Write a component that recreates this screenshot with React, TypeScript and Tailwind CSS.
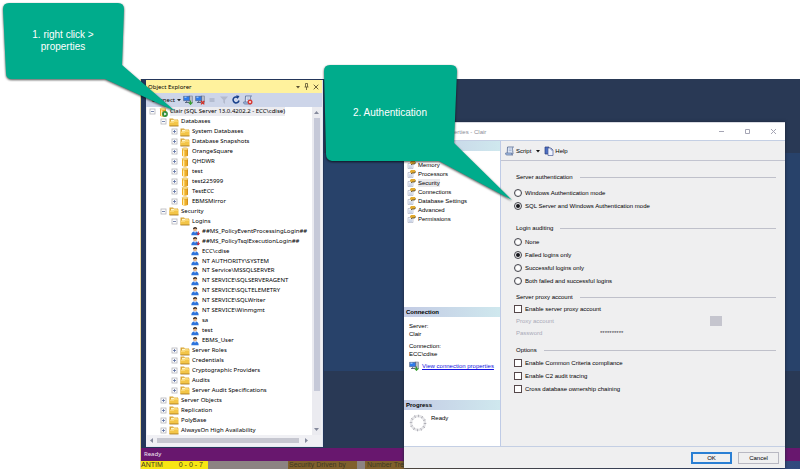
import type { ReactNode } from "react"

type NodeKind = "server" | "folder" | "db" | "user" | "userOff"

type TreeRow = {
  label: string
  depth: number
  kind: NodeKind
  open?: boolean
}

const rows: TreeRow[] = [
  { label: "Clair (SQL Server 13.0.4202.2 - ECC\\cdise)", depth: 0, kind: "server", open: true },
  { label: "Databases", depth: 1, kind: "folder", open: true },
  { label: "System Databases", depth: 2, kind: "folder" },
  { label: "Database Snapshots", depth: 2, kind: "folder" },
  { label: "OrangeSquare", depth: 2, kind: "db" },
  { label: "QHDWR", depth: 2, kind: "db" },
  { label: "test", depth: 2, kind: "db" },
  { label: "test225999", depth: 2, kind: "db" },
  { label: "TestECC", depth: 2, kind: "db" },
  { label: "EBMSMirror", depth: 2, kind: "db" },
  { label: "Security", depth: 1, kind: "folder", open: true },
  { label: "Logins", depth: 2, kind: "folder", open: true },
  { label: "##MS_PolicyEventProcessingLogin##", depth: 3, kind: "userOff" },
  { label: "##MS_PolicyTsqlExecutionLogin##", depth: 3, kind: "userOff" },
  { label: "ECC\\cdise", depth: 3, kind: "user" },
  { label: "NT AUTHORITY\\SYSTEM", depth: 3, kind: "user" },
  { label: "NT Service\\MSSQLSERVER", depth: 3, kind: "user" },
  { label: "NT SERVICE\\SQLSERVERAGENT", depth: 3, kind: "user" },
  { label: "NT SERVICE\\SQLTELEMETRY", depth: 3, kind: "user" },
  { label: "NT SERVICE\\SQLWriter", depth: 3, kind: "user" },
  { label: "NT SERVICE\\Winmgmt", depth: 3, kind: "user" },
  { label: "sa", depth: 3, kind: "user" },
  { label: "test", depth: 3, kind: "user" },
  { label: "EBMS_User", depth: 3, kind: "user" },
  { label: "Server Roles", depth: 2, kind: "folder" },
  { label: "Credentials", depth: 2, kind: "folder" },
  { label: "Cryptographic Providers", depth: 2, kind: "folder" },
  { label: "Audits", depth: 2, kind: "folder" },
  { label: "Server Audit Specifications", depth: 2, kind: "folder" },
  { label: "Server Objects", depth: 1, kind: "folder" },
  { label: "Replication", depth: 1, kind: "folder" },
  { label: "PolyBase", depth: 1, kind: "folder" },
  { label: "AlwaysOn High Availability", depth: 1, kind: "folder" },
]

const indents = ["pl-[2px]", "pl-[13px]", "pl-[24px]", "pl-[34px]"]

const pages = [
  "General",
  "Memory",
  "Processors",
  "Security",
  "Connections",
  "Database Settings",
  "Advanced",
  "Permissions",
]

function NodeIcon({ kind }: { kind: NodeKind }) {
  if (kind === "folder") {
    return (
      <svg className="h-[10px] w-[10px] shrink-0" viewBox="0 0 10 10">
        <path d="M.5 1.500h3.500l1 1h4v6.500H.5z" fill="#d9a536" />
        <path d="M2 2.800h6V7H2z" fill="#fff6c8" />
        <path d="M.5 9V4.500h4l1-1.200H9.500V9z" fill="#f3c548" />
        <path d="M1 5.300h3.800l1-1.100H9" stroke="#ffe79a" strokeWidth=".7" fill="none" />
        <path d="M.5 9h9" stroke="#9c6c14" strokeWidth=".8" />
      </svg>
    )
  }
  if (kind === "db" || kind === "server") {
    return (
      <svg className="h-[10px] w-[10px] shrink-0" viewBox="0 0 10 10">
        <path d="M2 2v6.500c0 1.500 6 1.500 6 0V2z" fill="#f0b02a" />
        <path d="M3.700 2.500v6.700" stroke="#fff0b0" strokeWidth="1.300" />
        <path d="M7.400 2.500v6.300" stroke="#c98a18" strokeWidth=".9" />
        <ellipse cx="5" cy="1.900" rx="3" ry="1.200" fill="#ffe38a" stroke="#c98d1a" strokeWidth=".4" />
        {kind === "server" && (
          <>
            <circle cx="7" cy="7" r="2.900" fill="#2f8f3a" />
            <path d="M6.200 5.500v3L8.700 7z" fill="#fff" />
          </>
        )}
      </svg>
    )
  }
  return (
    <svg className="h-[10px] w-[10px] shrink-0" viewBox="0 0 10 10">
      <path d="M1.300 9.200c0-3 1.700-4 3.700-4s3.700 1 3.700 4z" fill="#2f74dc" />
      <path d="M4 5.200l1 1.700 1.200-1.700z" fill="#fff" />
      <circle cx="5" cy="3.400" r="1.900" fill="#e8b48a" />
      <path d="M3 3.200C3 .4 7.200.4 7.200 3.200L5.500 2.400z" fill="#3b2b20" />
      {kind === "userOff" && <path d="M8.300 5.500v3M7 7.300l1.300 1.700 1.300-1.700" stroke="#c8202c" fill="none" />}
    </svg>
  )
}

function Expander({ open }: { open?: boolean }) {
  return (
    <svg className="h-[7px] w-[7px] shrink-0" viewBox="0 0 7 7" fill="none">
      <rect x="1" y="1" width="5" height="5" fill="#fff" stroke="#b4b4ba" strokeWidth=".8" />
      <path d={open ? "M2 3.500h3" : "M2 3.500h3M3.500 2v3"} stroke="#5b6da0" strokeWidth=".8" />
    </svg>
  )
}

function ServerIcon({ off }: { off?: boolean }) {
  return (
    <svg className="h-[10px] w-[10px] shrink-0" viewBox="0 0 10 10">
      <rect x="6" y="1" width="3.500" height="7" fill="#b8bcc8" stroke="#6b7285" strokeWidth=".5" />
      <rect x=".7" y="1.200" width="6" height="4.600" fill="#2f7bea" stroke="#5c6680" strokeWidth=".6" />
      <path d="M1.500 2.200h2" stroke="#b8dcff" />
      <path d="M2 7.500h4M3.700 6v1.500" stroke="#5c6680" />
      {off ? (
        <path d="M6 6l3.300 3.300M9.300 6L6 9.300" stroke="#d52a20" strokeWidth="1.200" />
      ) : (
        <path d="M7.500 5.500v3.700M5.700 7.300l1.800 2 1.800-2" stroke="#35a02c" strokeWidth="1.100" fill="none" />
      )}
    </svg>
  )
}

function ScriptIcon({ off }: { off?: boolean }) {
  return (
    <svg className="h-[10px] w-[10px] shrink-0" viewBox="0 0 10 10">
      <path d="M2.500 1h6c-1.500.5-1 2-.8 3.500L8 8H2.200z" fill="#e3ecfa" stroke="#566a92" strokeWidth=".8" />
      <path d="M.6 7h6.200c-.6 1 .2 2 1 2H1.800C.8 9 .4 8 .6 7z" fill="#a9c3ea" stroke="#566a92" strokeWidth=".7" />
      <path d="M3.700 3h3M3.700 4.700h3" stroke="#7d92ba" strokeWidth=".6" />
      {off && (
        <>
          <circle cx="7" cy="7" r="2.500" fill="#d83a34" />
          <path d="M6 6l2 2M8 6L6 8" stroke="#fff" strokeWidth=".7" />
        </>
      )}
    </svg>
  )
}

function ObjectExplorer() {
  return (
    <section className="flex h-[367px] w-[177px] flex-col border-r border-b border-[#e4e8f0] bg-[#f0f0f4] font-['Noto_Sans','Open_Sans',sans-serif] text-[6px] text-black">
      <header className="flex h-[13px] shrink-0 items-center bg-[#fff29d] pr-[2px] pl-[2px]">
        <h2 className="flex-1 leading-[10px]">Object Explorer</h2>
        <button type="button" aria-label="Window position" className="flex w-[9px] justify-center">
          <svg className="h-[6px] w-[6px]" viewBox="0 0 6 6">
            <path d="M1 2h4L3 4.500z" fill="#5a5030" />
          </svg>
        </button>
        <button type="button" aria-label="Auto hide" className="flex w-[9px] justify-center">
          <svg className="h-[7px] w-[5px]" viewBox="0 0 5 7" fill="none" stroke="#5a5030" strokeWidth=".8">
            <path d="M1.500 4V.5h2V4M.5 4h4M2.500 4v3" />
          </svg>
        </button>
        <button type="button" aria-label="Close" className="flex w-[9px] justify-center">
          <svg className="h-[6px] w-[6px]" viewBox="0 0 6 6" stroke="#5a5030" strokeWidth=".9">
            <path d="M.7.7l4.600 4.600M5.300.7L.7 5.300" />
          </svg>
        </button>
      </header>

      <div className="flex h-[14px] shrink-0 items-center gap-[2px] bg-[#cdd5e9] pl-[3px]">
        <button type="button" className="flex w-[32px] items-center justify-end gap-[2px] leading-[10px]">
          Connect
          <svg className="h-[4px] w-[4px]" viewBox="0 0 4 4">
            <path d="M0 1h4L2 3.300z" fill="#222" />
          </svg>
        </button>
        <button type="button" aria-label="Connect server"><ServerIcon /></button>
        <button type="button" aria-label="Disconnect server"><ServerIcon off /></button>
        <button type="button" aria-label="Stop">
          <svg className="h-[10px] w-[10px]" viewBox="0 0 10 10" stroke="#9aa3b8">
            <path d="M2.500 4h5M2.500 6h5" />
          </svg>
        </button>
        <button type="button" aria-label="Filter">
          <svg className="h-[10px] w-[10px]" viewBox="0 0 10 10">
            <path d="M1 1.500h8L6 5v4L4.300 7.500V5z" fill="#b3bace" />
          </svg>
        </button>
        <button type="button" aria-label="Refresh">
          <svg className="h-[10px] w-[10px]" viewBox="0 0 10 10" fill="none" stroke="#173f8a" strokeWidth="1.500">
            <path d="M7 2.600A3 3 0 1 0 8 5.500" />
            <path d="M5.200.3L8.500 1 6.500 4z" fill="#173f8a" stroke="none" />
          </svg>
        </button>
        <button type="button" aria-label="Clear script"><ScriptIcon off /></button>
      </div>

      <div className="mr-px ml-px flex min-h-0 flex-1">
        <ul className="grid h-[328px] min-w-0 flex-1 auto-rows-fr overflow-hidden bg-white">
          {rows.map((row, i) => (
            <li key={i} className={`flex items-center gap-[2px] ${indents[row.depth]}`}>
              {row.depth < 3 ? <Expander open={row.open} /> : <span className="w-[7px] shrink-0" />}
              <NodeIcon kind={row.kind} />
              <span className={`leading-[9px] whitespace-nowrap ${row.kind === "server" ? "bg-[#ececf0]" : ""}`}>
                {row.label}
              </span>
            </li>
          ))}
        </ul>
        <div className="flex w-[9px] flex-col items-center bg-[#ebebf0] pt-[3px] pb-[3px]">
          <svg className="h-[5px] w-[5px] shrink-0" viewBox="0 0 5 5">
            <path d="M0 4h5L2.500 1z" fill="#858a9c" />
          </svg>
          <div className="mt-[3px] mb-[36px] w-[6px] flex-1 bg-[#c6c9d8]" />
          <svg className="h-[5px] w-[5px] shrink-0" viewBox="0 0 5 5">
            <path d="M0 1h5L2.500 4z" fill="#858a9c" />
          </svg>
        </div>
      </div>

      <div className="mr-[10px] flex h-[11px] shrink-0 items-center justify-between gap-[3px] px-[3px]">
        <svg className="h-[5px] w-[5px]" viewBox="0 0 5 5">
          <path d="M4 0v5L1 2.500z" fill="#858a9c" />
        </svg>
        <div className="mr-[2px] h-[5px] flex-1 bg-[#c6c7d0]" />
        <svg className="h-[5px] w-[5px]" viewBox="0 0 5 5">
          <path d="M1 0v5l3-2.500z" fill="#858a9c" />
        </svg>
      </div>
    </section>
  )
}

function PaneHeader({ children }: { children: ReactNode }) {
  return (
    <h3 className="h-[10px] bg-linear-to-r from-[#c3cbe4] to-[#cfe8ee] pl-[2px] leading-[10px] font-bold">
      {children}
    </h3>
  )
}

function GroupTitle({ children }: { children: ReactNode }) {
  return (
    <h3 className="flex h-[10px] items-center gap-[7px] pl-[2px]">
      {children}
      <span className="h-px flex-1 bg-[#bfc0ca]" />
    </h3>
  )
}

function Radio({ name, label, checked }: { name: string; label: string; checked?: boolean }) {
  return (
    <label className="flex h-[13px] items-center gap-[3px]">
      <input
        type="radio"
        name={name}
        defaultChecked={checked}
        className="h-[8px] w-[8px] appearance-none rounded-full border border-[#44444c] bg-white bg-clip-content p-px checked:bg-[#16161c]"
      />
      {label}
    </label>
  )
}

function Check({ label }: { label: string }) {
  return (
    <label className="flex h-[13px] items-center gap-[3px]">
      <input type="checkbox" className="h-[8px] w-[8px] appearance-none border border-[#55474a] bg-white checked:bg-[#16161c]" />
      {label}
    </label>
  )
}

function PropertiesDialog() {
  return (
    <section className="absolute top-[122px] right-[15px] left-[404px] border-t border-[#d9dbe2] bg-[#efeff0] font-['Liberation_Sans',Arial,sans-serif] text-[6px] leading-[8px] text-black shadow-[0_0_3px_#1b2438]">
      <header className="flex h-[17px] items-center bg-white pr-[8px] pl-[18px]">
        <h2 className="flex-1 text-[#8c8c98]">Server Properties - Clair</h2>
        <div className="flex gap-[19px]">
          <button type="button" aria-label="Minimize">
            <svg className="h-[7px] w-[7px]" viewBox="0 0 7 7" stroke="#a5a5b4"><path d="M1 3.500h5" /></svg>
          </button>
          <button type="button" aria-label="Maximize">
            <svg className="h-[7px] w-[7px]" viewBox="0 0 7 7" fill="none" stroke="#a5a5b4"><path d="M1.500 1.500h4v4h-4z" /></svg>
          </button>
          <button type="button" aria-label="Close">
            <svg className="h-[7px] w-[7px]" viewBox="0 0 7 7" stroke="#a5a5b4"><path d="M1 1l5 5M6 1L1 6" /></svg>
          </button>
        </div>
      </header>

      <div className="flex h-[307px] border-t border-b border-[#c4cfe4]">
        <aside className="flex w-[97px] flex-col border-r border-[#bfcbe6] bg-white">
          <PaneHeader>Select a page</PaneHeader>
          <ul className="h-[156px]">
            {pages.map((page) => (
              <li key={page} className="flex h-[9px] items-center gap-[2px] pl-[3px]">
                <svg className="h-[9px] w-[9px] shrink-0" viewBox="0 0 9 9">
                  <path d="M1 3.500h5v5H1z" fill="#f2f4fa" stroke="#a4abc0" strokeWidth=".6" />
                  <path d="M2 6h3M2 7.300h3" stroke="#8fa4cc" strokeWidth=".5" />
                  <path d="M2.800 2.500L4 1h4l.6 1.500L7.800 4H5.500L4.700 5z" fill="#e2aa2e" />
                  <path d="M4 4.800L5.500 4h2.300l.8-1.500" fill="none" stroke="#3c3322" strokeWidth=".7" />
                </svg>
                <span className={page === "Security" ? "bg-[#e9e9ec]" : ""}>{page}</span>
              </li>
            ))}
          </ul>
          <PaneHeader>Connection</PaneHeader>
          <div className="flex h-[83px] flex-col pt-[5px] pl-[5px]">
            <dl>
              <dt>Server:</dt>
              <dd className="mb-[4px]">Clair</dd>
              <dt>Connection:</dt>
              <dd>ECC\cdise</dd>
            </dl>
            <div className="mt-[3px] flex items-center gap-[3px]">
              <ServerIcon />
              <a href="#connection" className="whitespace-nowrap text-[#1414e0] underline">View connection properties</a>
            </div>
          </div>
          <PaneHeader>Progress</PaneHeader>
          <div className="flex items-start gap-[4px] pt-[4px] pl-[5px]">
            <svg className="h-[18px] w-[18px]" viewBox="0 0 18 18" fill="none">
              <circle cx="9" cy="9" r="7" stroke="#e4e4e7" strokeWidth="2.500" />
              <circle cx="9" cy="9" r="7" stroke="#a8a8b0" strokeWidth="2.500" strokeDasharray=".8 2.865" />
            </svg>
            Ready
          </div>
        </aside>

        <div className="min-w-0 flex-1">
          <div className="flex h-[20px] items-center border-b border-[#c2c4d0] pl-[4px]">
            <button type="button" className="flex items-center gap-px">
              <ScriptIcon />
              Script
              <svg className="ml-[4px] h-[4px] w-[4px]" viewBox="0 0 4 4"><path d="M0 1h4L2 3.500z" fill="#111" /></svg>
            </button>
            <button type="button" className="ml-[4px] flex items-center gap-px">
              <svg className="h-[10px] w-[10px]" viewBox="0 0 10 10">
                <path d="M1 1h4v7H1z" fill="#4c6fc4" stroke="#2c3d78" strokeWidth=".7" />
                <path d="M4 2h3l2 2v5.500H4z" fill="#eef3ff" stroke="#4f5f96" strokeWidth=".7" />
                <path d="M7 2v2h2" fill="none" stroke="#4f5f96" strokeWidth=".6" />
              </svg>
              Help
            </button>
          </div>

          <div className="flex flex-col pt-[11px] pr-[9px] pl-[13px]">
            <GroupTitle>Server authentication</GroupTitle>
            <div className="pt-[4px] pb-[11px]">
              <Radio name="auth" label="Windows Authentication mode" />
              <Radio name="auth" label="SQL Server and Windows Authentication mode" checked />
            </div>
            <GroupTitle>Login auditing</GroupTitle>
            <div className="pt-[2px] pb-[5px]">
              <Radio name="audit" label="None" />
              <Radio name="audit" label="Failed logins only" checked />
              <Radio name="audit" label="Successful logins only" />
              <Radio name="audit" label="Both failed and successful logins" />
            </div>
            <GroupTitle>Server proxy account</GroupTitle>
            <Check label="Enable server proxy account" />
            <div className="flex items-start pb-[6px] pl-[2px] text-[#a9aab8]">
              <div className="flex-1">
                <label className="flex h-[12px] items-center">
                  <span className="w-[84px]">Proxy account</span>
                  <input type="text" disabled className="h-[8px] w-[90px]" />
                </label>
                <label className="flex h-[12px] items-center">
                  <span className="w-[84px]">Password</span>
                  <input type="text" disabled defaultValue="**********" className="h-[8px] w-[90px] text-[#3c3c48]" />
                </label>
              </div>
              <button type="button" aria-label="Browse" className="mt-px mr-[54px] h-[10px] w-[12px] bg-[#c5c5ce]" />
            </div>
            <GroupTitle>Options</GroupTitle>
            <div className="pt-px">
              <Check label="Enable Common Criteria compliance" />
              <Check label="Enable C2 audit tracing" />
              <Check label="Cross database ownership chaining" />
            </div>
          </div>
        </div>
      </div>

      <footer className="flex h-[21px] items-center justify-end gap-[6px] pr-[6px]">
        <button type="button" className="flex h-[12px] w-[41px] items-center justify-center border-2 border-[#2a7fd4]">OK</button>
        <button type="button" className="flex h-[12px] w-[41px] items-center justify-center border border-[#b8b8c2]">Cancel</button>
      </footer>
    </section>
  )
}

export default function App() {
  return (
    <main className="relative min-h-screen overflow-hidden bg-white pt-[79px] pl-[140px]">
      <div className="border-l border-[#e8d8a0]">
        <div className="h-[369px] bg-[linear-gradient(#293955_0_20%,#28426a_20%_79%,#293955_79%)]">
          <div className="h-full w-[183px] bg-[#24365a] pt-px pl-[5px]">
            <ObjectExplorer />
          </div>
        </div>
        <div className="h-[13px] bg-[#68176e] pl-[3px] font-['Noto_Sans','Open_Sans',sans-serif] text-[6px] leading-[13px] text-[#f0e6f2]">
          Ready
        </div>
        <div className="flex h-[8px] bg-[#8c8383] font-['Liberation_Sans',Arial,sans-serif] text-[7px] leading-[8px] whitespace-nowrap text-[#3f3820]">
          <div className="flex w-[67px] gap-[16px] bg-[#f7e614]">
            <span>ANTIM</span>
            <span>0 - 0 - 7</span>
          </div>
          <div className="ml-[80px] w-[69px] bg-[#80602c] pl-px">Security Driven by</div>
          <div className="ml-[8px] w-[39px] bg-[#80602c] pl-[2px]">Number Tre</div>
          <div className="flex-1 bg-linear-to-r from-[#6b5b44] to-[#31497e]" />
        </div>
      </div>

      <PropertiesDialog />

      <div className="absolute top-0 left-0 h-[112px] w-[176px] font-['Liberation_Sans',Arial,sans-serif]">
        <svg className="absolute inset-0 h-full w-full overflow-visible drop-shadow-[0_1px_1px_rgba(0,0,0,0.7)]" viewBox="0 0 176 112">
          <path d="M9 3H118Q124 3 124 9L122 65L175 111L105 79H12Q6 79 6 73L3 9Q3 3 9 3Z" fill="#00ac8c" />
        </svg>
        <p className="relative mt-[29px] ml-[4px] w-[118px] text-center text-[10px] leading-[12px] text-white">
          1. right click &gt;
          <br />
          properties
        </p>
      </div>

      <div className="absolute top-[65px] left-[323px] h-[136px] w-[190px] font-['Liberation_Sans',Arial,sans-serif]">
        <svg className="absolute inset-0 h-full w-full overflow-visible drop-shadow-[0_1px_1px_rgba(0,0,0,0.7)]" viewBox="0 0 190 136">
          <path d="M7 0H128Q134 0 134 6L131 78L189 135L116 96H9Q3 95 3 89L1 6Q1 0 7 0Z" fill="#00ac8c" />
        </svg>
        <p className="relative mt-[42px] w-[134px] text-center text-[10px] leading-[12px] text-white">2. Authentication</p>
      </div>
    </main>
  )
}
